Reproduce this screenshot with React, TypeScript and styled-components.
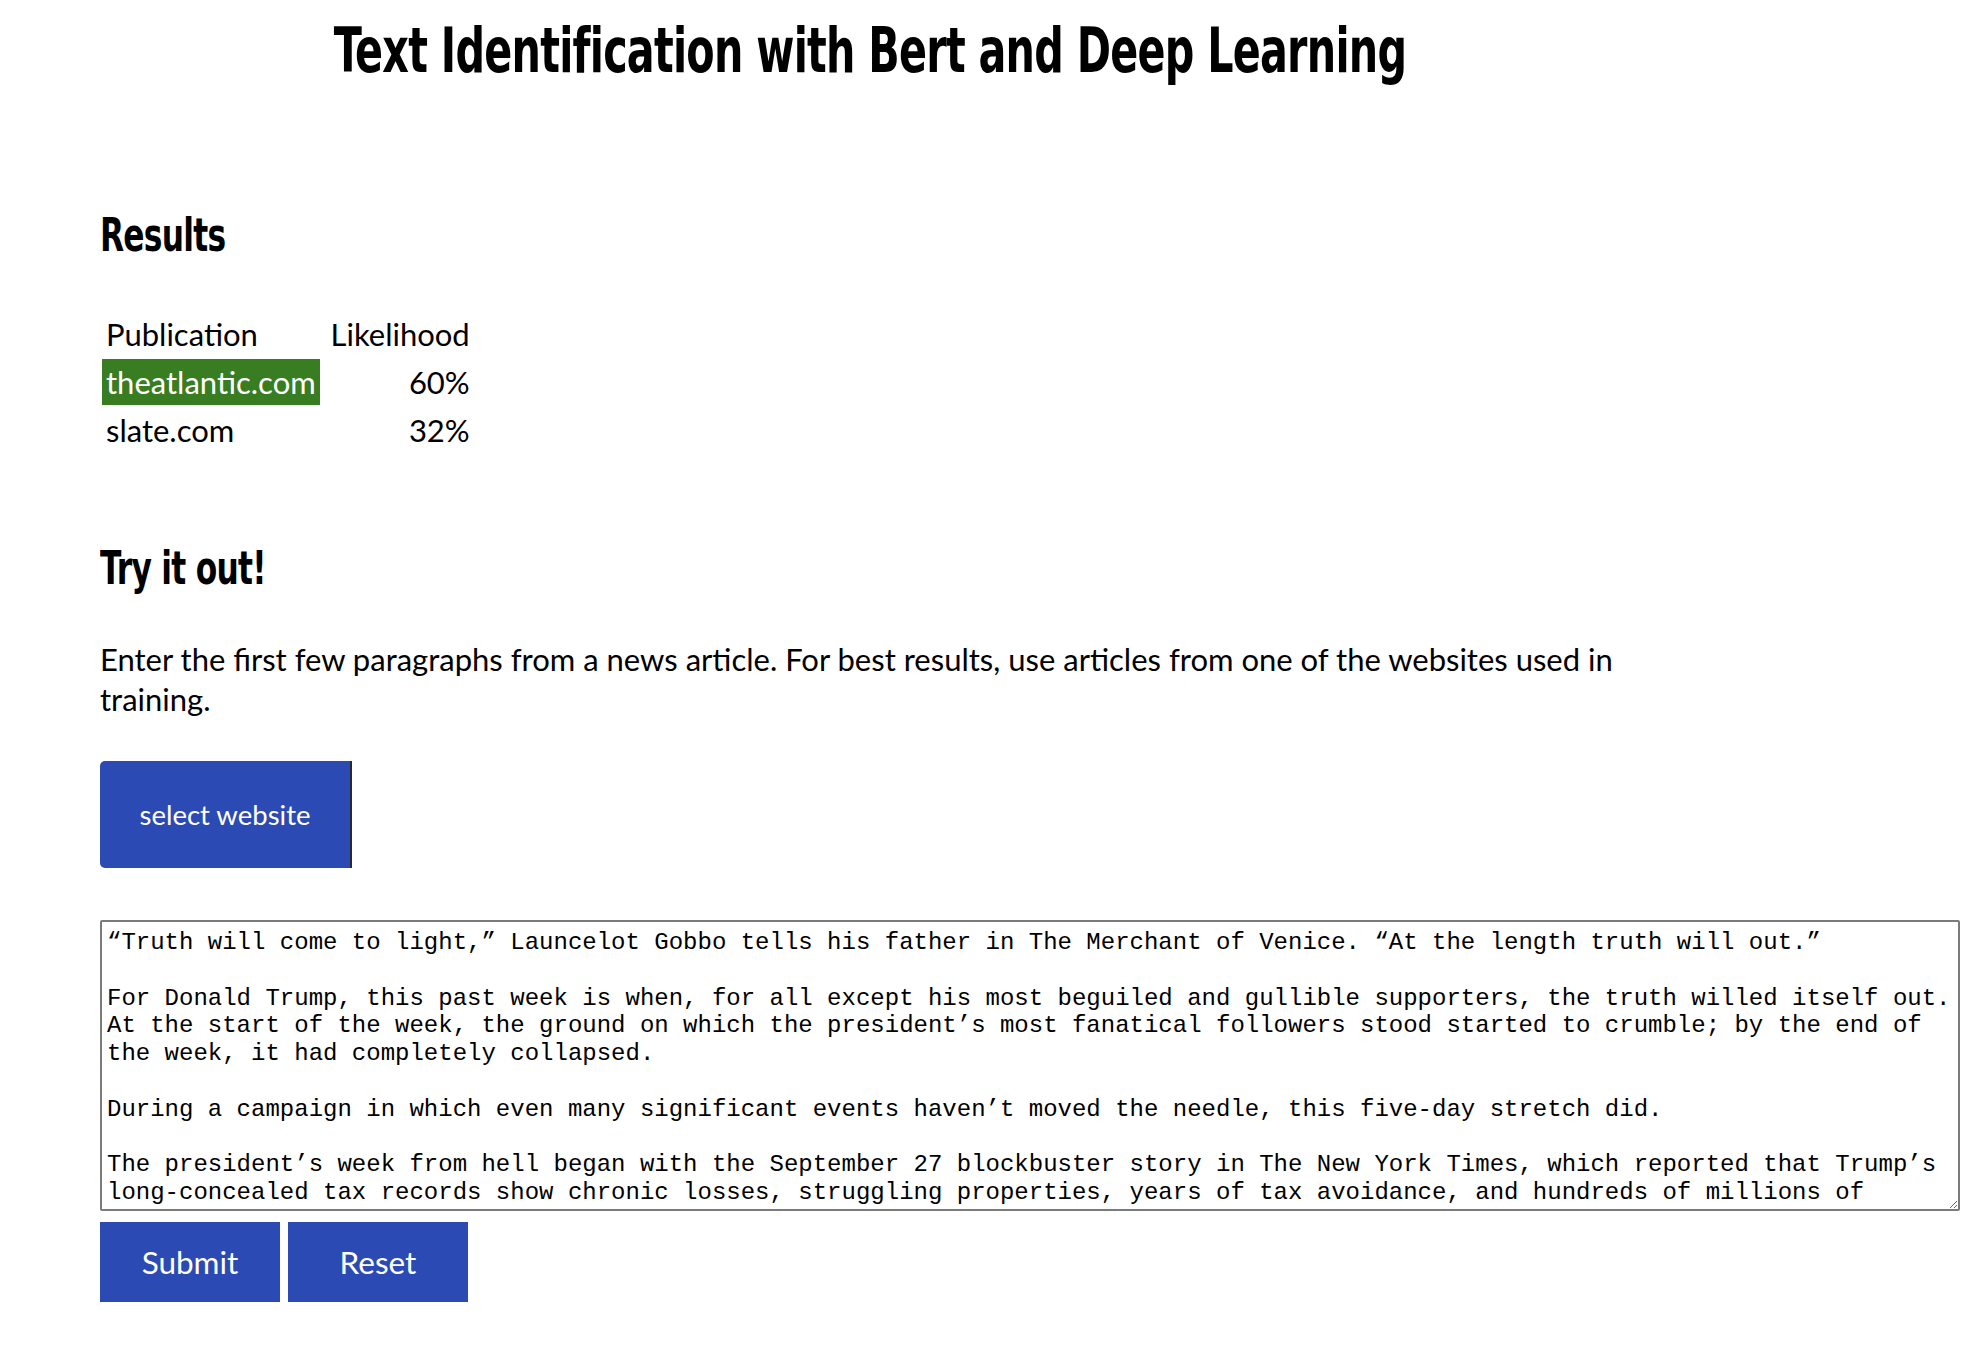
import styled, { createGlobalStyle } from "styled-components";

const ARTICLE = `“Truth will come to light,” Launcelot Gobbo tells his father in The Merchant of Venice. “At the length truth will out.”

For Donald Trump, this past week is when, for all except his most beguiled and gullible supporters, the truth willed itself out. At the start of the week, the ground on which the president’s most fanatical followers stood started to crumble; by the end of the week, it had completely collapsed.

During a campaign in which even many significant events haven’t moved the needle, this five-day stretch did.

The president’s week from hell began with the September 27 blockbuster story in The New York Times, which reported that Trump’s long-concealed tax records show chronic losses, struggling properties, years of tax avoidance, and hundreds of millions of dollars in debt, much of it coming due in the next four years.`;

const results = [
  { site: "theatlantic.com", pct: 60, top: true },
  { site: "slate.com", pct: 32, top: false },
];

const GlobalStyle = createGlobalStyle`
  body {
    margin: 0;
    background: #fff;
    color: #000;
    font-family: Lato, "Open Sans", sans-serif;
  }
`;

const Page = styled.div`
  width: 1540px;
  padding: 0 100px;
`;

// no narrow face installed, so the condensed heading look is squeezed horizontally
const Title = styled.h1`
  margin: 20px 0 0;
  font-family: "Liberation Sans Narrow", "DejaVu Sans Condensed", "DejaVu Sans", sans-serif;
  font-weight: 700;
  font-size: 62px;
  line-height: 1;
  text-align: center;
  letter-spacing: -1px;
  transform: scaleX(0.74);
  transform-origin: center;
`;

const Heading = styled.h2<{ gap: number }>`
  margin: ${({ gap }) => gap}px 0 0;
  font-family: "Liberation Sans Narrow", "DejaVu Sans Condensed", "DejaVu Sans", sans-serif;
  font-weight: 700;
  font-size: 47px;
  line-height: 1;
  letter-spacing: -1px;
  transform: scaleX(0.74);
  transform-origin: left;
`;

const ResultsTable = styled.table`
  margin-top: 51px;
  border-spacing: 2px;
  font-size: 31px;
  line-height: 40px;
`;

const Cell = styled.td<{ right?: boolean; highlight?: boolean }>`
  padding: 3px 4px;
  width: ${({ right }) => (right ? "144px" : "auto")};
  text-align: ${({ right }) => (right ? "right" : "left")};
  background: ${({ highlight }) => (highlight ? "#387d22" : "transparent")};
  color: ${({ highlight }) => (highlight ? "#fff" : "#000")};
`;

const Intro = styled.p`
  margin: 48px 0 0;
  font-size: 31px;
  line-height: 40px;
`;

const SelectButton = styled.button`
  display: block;
  margin-top: 42px;
  width: 252px;
  height: 107px;
  border: none;
  border-right: 2px solid #2a2a2a;
  border-radius: 5px 0 0 5px;
  background: #2c4ab3;
  color: #fff;
  font-family: Lato, "Open Sans", sans-serif;
  font-size: 27.5px;
  cursor: pointer;
`;

const ArticleInput = styled.textarea`
  display: block;
  box-sizing: border-box;
  margin-top: 52px;
  width: 1860px;
  height: 291px;
  padding: 7px 5px 4px;
  border: 2px solid #7b7b7b;
  border-radius: 2px;
  font-family: "Liberation Mono", "Courier New", monospace;
  font-size: 24px;
  line-height: 27.8px;
  color: #000;
  overflow: hidden;
  resize: both;
`;

const Actions = styled.div`
  display: flex;
  gap: 8px;
  margin-top: 11px;
`;

const ActionButton = styled.button`
  width: 180px;
  height: 80px;
  border: none;
  background: #2c4ab3;
  color: #fff;
  font-family: Lato, "Open Sans", sans-serif;
  font-size: 31.5px;
  cursor: pointer;
`;

export default function App() {
  return (
    <>
      <GlobalStyle />
      <Page>
        <Title>Text Identification with Bert and Deep Learning</Title>

        <Heading gap={129}>Results</Heading>
        <ResultsTable>
          <tbody>
            <tr>
              <Cell>Publication</Cell>
              <Cell right>Likelihood</Cell>
            </tr>
            {results.map((r) => (
              <tr key={r.site}>
                <Cell highlight={r.top}>{r.site}</Cell>
                <Cell right>{r.pct}%</Cell>
              </tr>
            ))}
          </tbody>
        </ResultsTable>

        <Heading gap={89}>Try it out!</Heading>
        <Intro>
          Enter the first few paragraphs from a news article. For best results, use articles from one of
          the websites used in training.
        </Intro>

        <SelectButton>select website</SelectButton>

        <ArticleInput defaultValue={ARTICLE} spellCheck={false} />

        <Actions>
          <ActionButton>Submit</ActionButton>
          <ActionButton>Reset</ActionButton>
        </Actions>
      </Page>
    </>
  );
}
